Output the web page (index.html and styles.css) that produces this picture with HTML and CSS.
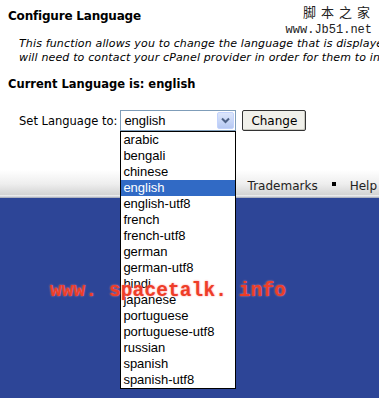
FILE: index.html
```html
<!DOCTYPE html>
<html lang="en">
<head>
    <meta charset="UTF-8">
    <meta name="viewport" content="width=device-width, initial-scale=1.0">
    <title>Configure Language</title>
    <link rel="stylesheet" href="styles.css">
</head>
<body>
    <div class="page">
        <div class="brand">
            <div class="brand-cn">脚本之家</div>
            <div class="brand-url">www.Jb51.net</div>
        </div>

        <h1>Configure Language</h1>
        <div class="intro">
            <div class="intro-line">This function allows you to change the language that is displayed in cPanel. If you need a language that is not listed, you</div>
            <div class="intro-line">will need to contact your cPanel provider in order for them to install it.</div>
        </div>
        <h2>Current Language is: english</h2>

        <form class="lang-form">
            <label>Set Language to:</label>
            <div class="select-box">
                <span class="select-value">english</span>
                <span class="select-arrow">
                    <svg width="9" height="7" viewBox="0 0 9 7">
                        <path d="M1 1.5 L4.5 5 L8 1.5" fill="none" stroke="#4d6185" stroke-width="2"/>
                    </svg>
                </span>
                <ul class="dropdown">
                    <li>arabic</li>
                    <li>bengali</li>
                    <li>chinese</li>
                    <li class="selected">english</li>
                    <li>english-utf8</li>
                    <li>french</li>
                    <li>french-utf8</li>
                    <li>german</li>
                    <li>german-utf8</li>
                    <li>hindi</li>
                    <li>japanese</li>
                    <li>portuguese</li>
                    <li>portuguese-utf8</li>
                    <li>russian</li>
                    <li>spanish</li>
                    <li>spanish-utf8</li>
                </ul>
            </div>
            <button type="button">Change</button>
        </form>
    </div>

    <div class="footer-bar">
        <a href="#">Trademarks</a>
        <span class="dot"></span>
        <a href="#">Help</a>
    </div>

    <div class="footer-blue">
        <div class="watermark">www. spacetalk. info</div>
    </div>
</body>
</html>
```

FILE: styles.css
```css
body {
    margin: 0;
    font-family: "DejaVu Sans", Verdana, sans-serif;
    color: #000;
    background: #fff;
    overflow: hidden;
}

.page {
    position: relative;
    height: 170px;
    padding: 8px 0 0 8px;
    box-sizing: border-box;
}

.brand {
    position: absolute;
    top: 4px;
    right: 7px;
    text-align: right;
}

.brand-cn {
    font-family: "Noto Sans CJK SC", sans-serif;
    font-size: 13px;
    line-height: 16px;
    letter-spacing: 5px;
    color: #222;
    margin-right: -3px;
}

.brand-url {
    font-family: "Liberation Mono", monospace;
    font-size: 12px;
    line-height: 14px;
    color: #222;
    margin-top: 3px;
}

h1 {
    font-size: 12px;
    font-weight: bold;
    letter-spacing: -0.2px;
    margin: 0;
    line-height: 16px;
}

.intro {
    margin: 13px 0 0 11px;
    font-size: 11px;
    font-style: italic;
    letter-spacing: 0.15px;
    line-height: 14px;
    white-space: nowrap;
    overflow: hidden;
}

h2 {
    font-size: 11.5px;
    font-weight: bold;
    margin: 11px 0 0 0;
    line-height: 16px;
}

.lang-form {
    display: flex;
    align-items: center;
    margin: 18px 0 0 11px;
}

.lang-form label {
    font-size: 11.5px;
    margin-right: 3px;
}

.select-box {
    position: relative;
    width: 116px;
    height: 21px;
    border: 1px solid #7f9db9;
    box-sizing: border-box;
    display: flex;
    align-items: center;
    background: #fff;
}

.select-value {
    flex: 1;
    font-family: "Liberation Sans", Arial, sans-serif;
    font-size: 13px;
    padding-left: 3px;
}

.select-arrow {
    width: 17px;
    height: 17px;
    margin-right: 1px;
    display: flex;
    align-items: center;
    justify-content: center;
    background: linear-gradient(#dce6fb, #b7c9f3);
    border: 1px solid #c3d3fd;
    box-sizing: border-box;
    border-radius: 2px;
}

.dropdown {
    position: absolute;
    left: -1px;
    top: 20px;
    width: 116px;
    margin: 0;
    padding: 0;
    list-style: none;
    border: 1px solid #000;
    box-sizing: border-box;
    background: #fff;
    z-index: 5;
}

.dropdown li {
    font-family: "Liberation Sans", Arial, sans-serif;
    font-size: 13px;
    line-height: 16px;
    height: 16px;
    padding-left: 2px;
}

.dropdown li.selected {
    background: #316ac5;
    color: #fff;
}

.lang-form button {
    margin-left: 6px;
    height: 21px;
    padding: 0 8px;
    font-family: "DejaVu Sans", Verdana, sans-serif;
    font-size: 12px;
    background: #f0f0ea;
    border: 1px solid #333;
    border-radius: 2px;
    box-shadow: inset -1px -1px 0 #c8c8c0;
}

.footer-bar {
    height: 28px;
    box-sizing: border-box;
    display: flex;
    align-items: flex-end;
    justify-content: flex-end;
    padding: 0 2px 5px 0;
    background: linear-gradient(#fff 0%, #eeeeee 50%, #d4d4d4 88%, #f2f2f2 92%, #9aa0b0 100%);
}

.footer-bar a {
    font-size: 12px;
    color: #222;
    text-decoration: none;
}

.footer-bar .dot {
    width: 4px;
    height: 4px;
    background: #000;
    margin: 0 14px 7px 14px;
}

.footer-blue {
    height: 200px;
    background: #2d4597;
    position: relative;
}

.watermark {
    position: absolute;
    left: 50px;
    top: 82px;
    font-family: "Liberation Mono", monospace;
    font-weight: bold;
    font-size: 19.5px;
    letter-spacing: 0.1px;
    color: #ee3d28;
    text-shadow: 0 0 2px #f88;
    z-index: 10;
}
```
